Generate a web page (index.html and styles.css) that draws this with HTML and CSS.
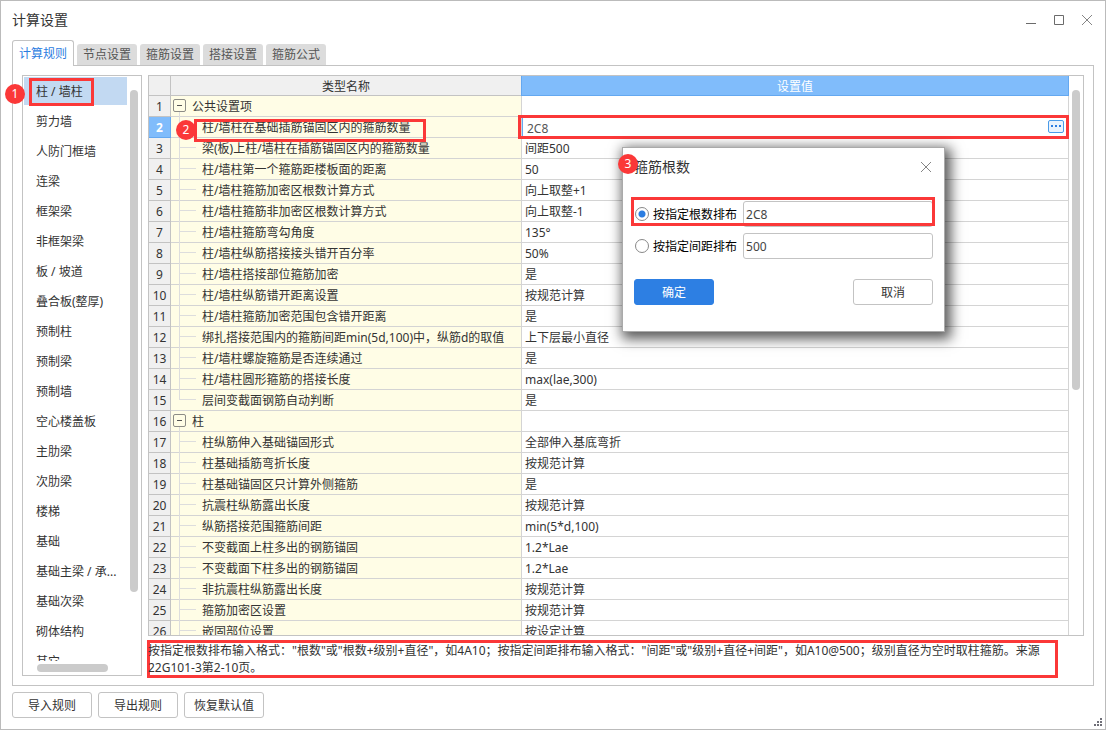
FILE: index.html
```html
<!DOCTYPE html>
<html lang="zh-CN">
<head>
<meta charset="utf-8">
<title>计算设置</title>
<link rel="stylesheet" href="styles.css">
</head>
<body>
<div class="window">
  <header class="titlebar">
    <h1 class="title">计算设置</h1>
    <div class="controls">
      <button class="ctl" type="button" aria-label="最小化"><svg viewBox="0 0 12 12"><path d="M1 9.5h10" stroke="#6b6b6b"/></svg></button>
      <button class="ctl" type="button" aria-label="最大化"><svg viewBox="0 0 12 12"><path d="M1.5 1.5h9v9h-9z" stroke="#6b6b6b"/></svg></button>
      <button class="ctl" type="button" aria-label="关闭"><svg viewBox="0 0 12 12"><path d="M1 1l10 10M11 1L1 11" stroke="#858585"/></svg></button>
    </div>
  </header>

  <nav class="tabs" role="tablist">
    <button class="tab active" type="button" role="tab" aria-selected="true">计算规则</button>
    <button class="tab" type="button" role="tab">节点设置</button>
    <button class="tab" type="button" role="tab">箍筋设置</button>
    <button class="tab" type="button" role="tab">搭接设置</button>
    <button class="tab" type="button" role="tab">箍筋公式</button>
  </nav>

  <main class="panel">
    <aside class="sidebar">
      <ul class="list">
        <li><a class="item selected" href="#">柱 / 墙柱</a></li>
        <li><a class="item" href="#">剪力墙</a></li>
        <li><a class="item" href="#">人防门框墙</a></li>
        <li><a class="item" href="#">连梁</a></li>
        <li><a class="item" href="#">框架梁</a></li>
        <li><a class="item" href="#">非框架梁</a></li>
        <li><a class="item" href="#">板 / 坡道</a></li>
        <li><a class="item" href="#">叠合板(整厚)</a></li>
        <li><a class="item" href="#">预制柱</a></li>
        <li><a class="item" href="#">预制梁</a></li>
        <li><a class="item" href="#">预制墙</a></li>
        <li><a class="item" href="#">空心楼盖板</a></li>
        <li><a class="item" href="#">主肋梁</a></li>
        <li><a class="item" href="#">次肋梁</a></li>
        <li><a class="item" href="#">楼梯</a></li>
        <li><a class="item" href="#">基础</a></li>
        <li><a class="item" href="#">基础主梁 / 承...</a></li>
        <li><a class="item" href="#">基础次梁</a></li>
        <li><a class="item" href="#">砌体结构</a></li>
        <li><a class="item" href="#">其它</a></li>
      </ul>
      <div class="vbar"><div class="thumb side-thumb"></div></div>
      <div class="hbar"><div class="thumb wide-thumb"></div></div>
      <span class="frame frame-item"></span>
      <span class="badge badge-item">1</span>
    </aside>

    <section class="content">
      <div class="grid-box">
        <div class="grid-scroll">
          <table class="grid">
            <colgroup><col class="col-no"><col class="col-name"><col></colgroup>
            <thead>
              <tr><th class="no"></th><th class="name">类型名称</th><th class="value">设置值</th></tr>
            </thead>
            <tbody>
              <tr class="group"><th>1</th><td><button class="toggle" type="button" aria-label="折叠"></button>公共设置项</td><td></td></tr>
              <tr class="current"><th>2</th><td>柱/墙柱在基础插筋锚固区内的箍筋数量<span class="frame frame-name"></span><span class="badge badge-name">2</span></td><td><div class="editor"><input class="cell-input" type="text" value="2C8" aria-label="设置值"><button class="more" type="button" aria-label="更多"><i></i><i></i><i></i></button></div><span class="frame frame-value"></span></td></tr>
              <tr><th>3</th><td>梁(板)上柱/墙柱在插筋锚固区内的箍筋数量</td><td>间距500</td></tr>
              <tr><th>4</th><td>柱/墙柱第一个箍筋距楼板面的距离</td><td>50</td></tr>
              <tr><th>5</th><td>柱/墙柱箍筋加密区根数计算方式</td><td>向上取整+1</td></tr>
              <tr><th>6</th><td>柱/墙柱箍筋非加密区根数计算方式</td><td>向上取整-1</td></tr>
              <tr><th>7</th><td>柱/墙柱箍筋弯勾角度</td><td>135°</td></tr>
              <tr><th>8</th><td>柱/墙柱纵筋搭接接头错开百分率</td><td>50%</td></tr>
              <tr><th>9</th><td>柱/墙柱搭接部位箍筋加密</td><td>是</td></tr>
              <tr><th>10</th><td>柱/墙柱纵筋错开距离设置</td><td>按规范计算</td></tr>
              <tr><th>11</th><td>柱/墙柱箍筋加密范围包含错开距离</td><td>是</td></tr>
              <tr><th>12</th><td>绑扎搭接范围内的箍筋间距min(5d,100)中，纵筋d的取值</td><td>上下层最小直径</td></tr>
              <tr><th>13</th><td>柱/墙柱螺旋箍筋是否连续通过</td><td>是</td></tr>
              <tr><th>14</th><td>柱/墙柱圆形箍筋的搭接长度</td><td>max(lae,300)</td></tr>
              <tr class="last"><th>15</th><td>层间变截面钢筋自动判断</td><td>是</td></tr>
              <tr class="group"><th>16</th><td><button class="toggle" type="button" aria-label="折叠"></button>柱</td><td></td></tr>
              <tr><th>17</th><td>柱纵筋伸入基础锚固形式</td><td>全部伸入基底弯折</td></tr>
              <tr><th>18</th><td>柱基础插筋弯折长度</td><td>按规范计算</td></tr>
              <tr><th>19</th><td>柱基础锚固区只计算外侧箍筋</td><td>是</td></tr>
              <tr><th>20</th><td>抗震柱纵筋露出长度</td><td>按规范计算</td></tr>
              <tr><th>21</th><td>纵筋搭接范围箍筋间距</td><td>min(5*d,100)</td></tr>
              <tr><th>22</th><td>不变截面上柱多出的钢筋锚固</td><td>1.2*Lae</td></tr>
              <tr><th>23</th><td>不变截面下柱多出的钢筋锚固</td><td>1.2*Lae</td></tr>
              <tr><th>24</th><td>非抗震柱纵筋露出长度</td><td>按规范计算</td></tr>
              <tr><th>25</th><td>箍筋加密区设置</td><td>按规范计算</td></tr>
              <tr><th>26</th><td>嵌固部位设置</td><td>按设定计算</td></tr>
            </tbody>
          </table>
        </div>
        <div class="grid-bar"><div class="thumb grid-thumb"></div></div>
      </div>
      <p class="note">按指定根数排布输入格式："根数"或"根数+级别+直径"，如4A10；按指定间距排布输入格式："间距"或"级别+直径+间距"，如A10@500；级别直径为空时取柱箍筋。来源22G101-3第2-10页。</p>
    </section>
  </main>

  <footer class="footer">
    <button class="btn" type="button">导入规则</button>
    <button class="btn" type="button">导出规则</button>
    <button class="btn" type="button">恢复默认值</button>
    <svg class="grip" viewBox="0 0 8 8"><path d="M6 0h2v2H6zM3 3h2v2H3zM6 3h2v2H6zM0 6h2v2H0zM3 6h2v2H3zM6 6h2v2H6z" fill="#6f6f78"/></svg>
  </footer>

  <form class="dialog" role="dialog" aria-labelledby="dlg-title">
    <div class="dialog-head">
      <h2 class="title" id="dlg-title">箍筋根数</h2>
      <button class="ctl" type="button" aria-label="关闭"><svg viewBox="0 0 12 12"><path d="M1 1l10 10M11 1L1 11" stroke="#858585"/></svg></button>
    </div>
    <div class="option">
      <input class="radio" type="radio" name="mode" id="by-count" checked>
      <label for="by-count">按指定根数排布</label>
      <input class="field" type="text" value="2C8" aria-label="按指定根数排布">
      <span class="frame frame-option"></span>
    </div>
    <div class="option">
      <input class="radio" type="radio" name="mode" id="by-space">
      <label for="by-space">按指定间距排布</label>
      <input class="field" type="text" value="500" aria-label="按指定间距排布">
    </div>
    <div class="actions">
      <button class="btn primary" type="button">确定</button>
      <button class="btn" type="button">取消</button>
    </div>
    <span class="badge badge-dialog">3</span>
  </form>
</div>
</body>
</html>
```
FILE: styles.css
```css
* { box-sizing: border-box; }

body {
  margin: 0;
  font: 12px/20px "Noto Sans", "Noto Sans CJK SC", sans-serif;
  color: #333;
  background: #fff;
}

button, input { font: inherit; color: inherit; margin: 0; }
button { padding: 0; border: 0; background: none; }

.window {
  position: relative;
  display: flex;
  flex-direction: column;
  height: 100vh;
  padding: 0 11px;
  border: 1px solid #bbb;
  background: #fff;
}

.titlebar {
  display: flex;
  align-items: center;
  justify-content: space-between;
  height: 37px;
  flex: none;
}
.title { margin: 0; font-size: 14px; font-weight: 400; }
.controls { display: flex; gap: 16px; padding-right: 1px; }
.ctl { display: block; width: 12px; height: 12px; }
.ctl svg { display: block; width: 12px; height: 12px; fill: none; }

.tabs { display: flex; align-items: flex-end; gap: 3px; flex: none; padding-top: 2px; }
.tab {
  width: 60px;
  height: 21px;
  border-radius: 3px 3px 0 0;
  background: #dcdcdc;
  color: #555;
}
.tab.active {
  position: relative;
  z-index: 1;
  width: 62px;
  height: 26px;
  margin-bottom: -1px;
  border: 1px solid #c3c3c3;
  border-bottom: 0;
  background: #fff;
  color: #2b7de1;
}

.panel {
  display: flex;
  flex: 1;
  gap: 6px;
  min-height: 0;
  padding: 9px;
  border: 1px solid #c3c3c3;
}

.sidebar {
  position: relative;
  display: grid;
  grid-template: 1fr 14px / 1fr 14px;
  flex: none;
  width: 120px;
  padding: 1px 0 0 1px;
  border: 1px solid #c3c3c3;
}
.list {
  min-height: 0;
  margin: 0;
  padding: 0;
  list-style: none;
  overflow: hidden;
}
.item {
  display: block;
  height: 28px;
  margin-bottom: 2px;
  padding-left: 12px;
  line-height: 30px;
  color: #333;
  text-decoration: none;
  white-space: nowrap;
}
.item.selected { background: #c2d9f2; }
.thumb { border-radius: 4px; background: #cbcbcb; }
.vbar { padding: 13px 3px 0; min-height: 0; }
.side-thumb { height: 88%; }
.hbar { padding: 3px 0 0 13px; }
.wide-thumb { width: 71px; height: 8px; }

.content { display: flex; flex: 1; flex-direction: column; min-width: 0; }
.grid-box { display: flex; flex: 1; min-height: 0; border: 1px solid #c3c3c3; }
.grid-scroll { flex: 1; min-width: 0; overflow: hidden; }
.grid-bar { flex: none; width: 14px; padding: 14px 3px 0; }
.grid-thumb { height: 55%; }

.grid { width: 100%; table-layout: fixed; border-collapse: separate; border-spacing: 0; }
.col-no { width: 22px; }
.col-name { width: 351px; }
.grid th, .grid td {
  height: 21px;
  padding: 2px 0 0;
  border: 0 solid #d4d4d4;
  border-width: 0 1px 1px 0;
  font-weight: 400;
  line-height: 18px;
  white-space: nowrap;
}
.grid th { background: #f0f0f0; border-color: #c3c3c3; }
.grid thead th { height: 20px; line-height: 17px; }
.grid thead .value { background: #80bcfb; border-color: #64a8f0; color: #fff; box-shadow: -1px 0 #64a8f0; }
.grid td { position: relative; text-align: left; }
.grid td:nth-child(2) { padding-left: 31px; background: #fffde6; }
.grid td:nth-child(3) { padding-left: 3px; }
.grid .group td:nth-child(2) { padding-left: 21px; }
.grid .current th { background: #80bcfb; border-color: #64a8f0; color: #fff; font-weight: 700; }
.grid .current td:nth-child(3) { padding: 0; }

/* Tree guide lines */
.grid td:nth-child(2)::before {
  content: "";
  position: absolute;
  top: 0;
  left: 8px;
  height: 21px;
  border-left: 1px solid #ddd;
}
.grid .group td:nth-child(2)::before { top: 16px; height: 5px; }
.grid .last td:nth-child(2)::before { height: 10px; }
.grid tr:not(.group) td:nth-child(2)::after {
  content: "";
  position: absolute;
  top: 9px;
  left: 8px;
  width: 17px;
  border-top: 1px solid #ddd;
}

.toggle {
  position: absolute;
  top: 3px;
  left: 2px;
  display: grid;
  place-items: center;
  width: 13px;
  height: 13px;
  border: 1px solid #8c8c86;
  border-radius: 2px;
}
.toggle::before { content: ""; width: 5px; height: 1px; background: #555; }

.editor {
  display: flex;
  align-items: center;
  height: 20px;
  padding-right: 4px;
  border-left: 1px solid #64a8f0;
}
.cell-input {
  flex: 1;
  min-width: 0;
  height: 20px;
  padding: 2px 4px 0;
  border: 0;
  outline: 0;
  background: none;
  color: #555;
}
.more {
  display: flex;
  align-items: center;
  justify-content: center;
  gap: 2px;
  width: 16px;
  height: 13px;
  margin-bottom: 2px;
  border: 1px solid #4a9be8;
  border-radius: 2px;
  background: #eaf3fd;
}
.more i { width: 2px; height: 2px; background: #2b7de1; }

.note {
  flex: none;
  margin: 4px 26px -2px -1px;
  padding: 2px 3px 2px 1px;
  line-height: 17px;
  box-shadow: inset 0 0 0 3px #fb3838;
}

.footer { display: flex; gap: 6px; flex: none; padding: 6px 0 11px; }
.btn {
  width: 80px;
  height: 26px;
  padding-top: 2px;
  border: 1px solid #c3c3c3;
  border-radius: 3px;
  background: #fff;
}
.grip { width: 8px; height: 8px; margin: auto -8px -8px auto; }

.dialog {
  position: absolute;
  top: 146px;
  left: 621px;
  width: 323px;
  padding: 0 11px 26px;
  border: 1px solid #aaa;
  background: #fff;
  color: #000;
  box-shadow: 3px 4px 12px 3px rgba(0, 0, 0, .65);
  z-index: 2;
}
.dialog-head {
  display: flex;
  align-items: center;
  justify-content: space-between;
  height: 37px;
  margin-bottom: 16px;
  padding-right: 1px;
  color: #333;
}
.option { position: relative; display: flex; align-items: center; height: 26px; margin-bottom: 6px; }
.option label { margin: 0 6px 0 4px; padding-top: 1px; }
.radio {
  appearance: none;
  flex: none;
  width: 14px;
  height: 14px;
  margin-left: 1px;
  border: 1px solid #888;
  border-radius: 50%;
  background: #fff;
}
.radio:checked { background: radial-gradient(circle, #2b7de1 3px, #fff 4px); }
.field {
  flex: 1;
  min-width: 0;
  height: 26px;
  padding: 0 2px;
  border: 1px solid #c3c3c3;
  border-radius: 3px;
  color: #444;
}
.actions { display: flex; justify-content: space-between; padding-top: 14px; color: #333; }
.btn.primary { border-color: #2d7fe3; background: #2d7fe3; color: #fff; }

/* Step callouts */
.frame { position: absolute; z-index: 1; border: 3px solid #fb3838; pointer-events: none; }
.frame-item { top: 2px; left: 6px; width: 65px; height: 28px; }
.frame-name { top: 2px; left: 23px; width: 232px; height: 23px; }
.frame-value { top: -2px; left: -4px; right: -1px; height: 24px; }
.frame-option { top: -4px; left: -3px; right: -2px; height: 29px; }
.badge {
  position: absolute;
  z-index: 2;
  width: 20px;
  height: 20px;
  border-radius: 50%;
  background: #fb3838;
  color: #fff;
  line-height: 20px;
  text-align: center;
}
.badge-item { top: 8px; left: -18px; }
.badge-name { top: 3px; left: 5px; }
.badge-dialog { top: 6px; left: -5px; }
```
